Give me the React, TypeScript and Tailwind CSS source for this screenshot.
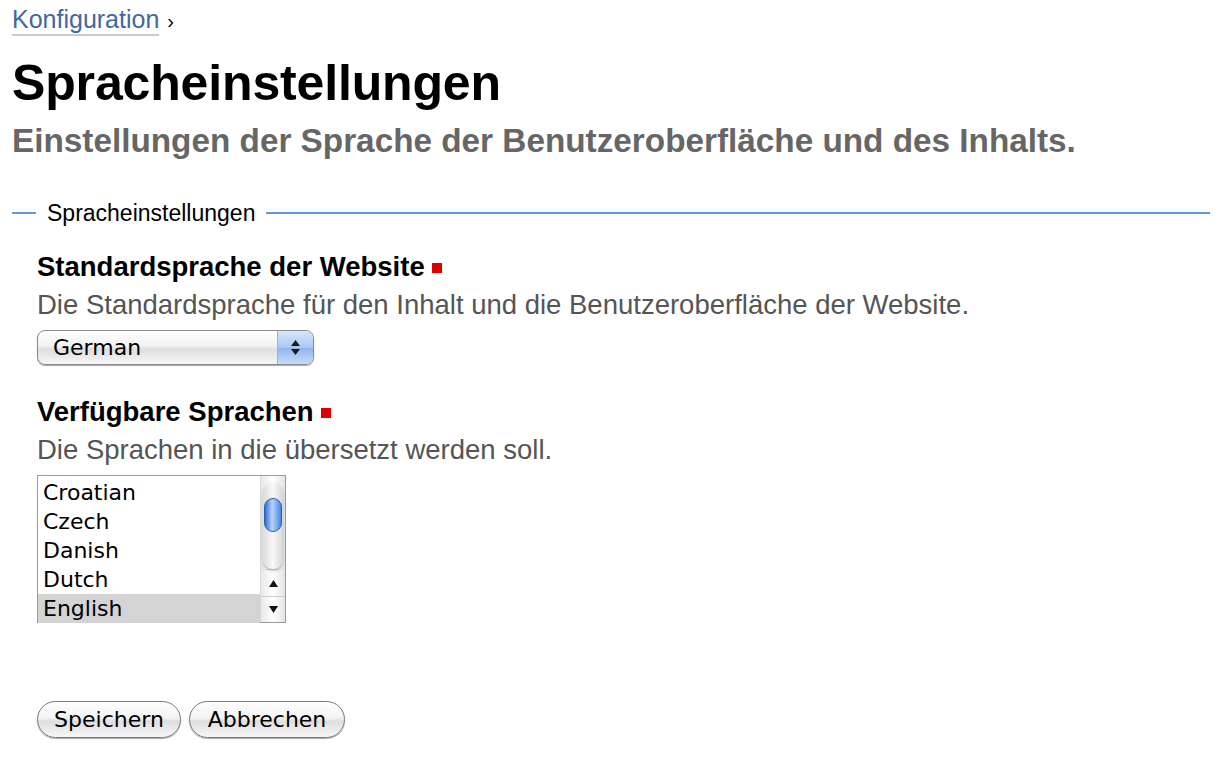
import React from "react";

const LANGUAGES = ["Croatian", "Czech", "Danish", "Dutch", "English"];

const controlFont = "font-['DejaVu_Sans','Lucida_Grande',sans-serif]";

function Required() {
  return <span className="inline-block w-[10px] h-[10px] bg-[#dd0000] ml-[7px] align-[3px]" />;
}

function SelectBox() {
  return (
    <div
      className={`relative w-[277px] h-[35px] rounded-[8px] border border-[#8a8a8a] shadow-[0_1px_1px_rgba(0,0,0,0.35)] flex overflow-hidden bg-[linear-gradient(#ffffff,#f2f2f2_45%,#dedede_55%,#f6f6f6)] ${controlFont}`}
    >
      <div className="flex-1 pl-[15px] text-[22px] leading-[34px] text-black">German</div>
      <div className="w-[36px] border-l border-[#9cb3d6] bg-[linear-gradient(#d6e6fb,#a9c9f2_50%,#8fb6ec_52%,#c4dcfb)] flex flex-col items-center justify-center gap-[3px]">
        <svg width="9" height="6" viewBox="0 0 9 6">
          <path d="M4.5 0 L9 6 L0 6 Z" fill="#1a1a1a" />
        </svg>
        <svg width="9" height="6" viewBox="0 0 9 6">
          <path d="M0 0 L9 0 L4.5 6 Z" fill="#1a1a1a" />
        </svg>
      </div>
    </div>
  );
}

function ListBox() {
  return (
    <div className={`w-[249px] h-[148px] border border-[#9a9a9a] flex ${controlFont}`}>
      <div className="flex-1 pt-[2px] border-r border-[#d8d8d8]">
        {LANGUAGES.map((l) => (
          <div
            key={l}
            className={`h-[29px] pl-[5px] text-[22px] leading-[29px] text-black ${
              l === "English" ? "bg-[#d4d4d4]" : ""
            }`}
          >
            {l}
          </div>
        ))}
      </div>
      <div className="w-[24px] flex flex-col bg-[linear-gradient(90deg,#e9e9e9,#ffffff_50%,#e4e4e4)]">
        <div className="relative h-[88px] mt-[6px] mx-[2px] rounded-[10px] bg-[linear-gradient(90deg,#dcdcdc,#f8f8f8_50%,#d6d6d6)] shadow-[0_2px_3px_rgba(0,0,0,0.25)]">
          <div className="absolute left-[1px] right-[1px] top-[16px] h-[34px] rounded-[9px] border border-[#2a5db5] bg-[linear-gradient(90deg,#2f6fd0,#b8d4fa_45%,#4a86e0)]" />
        </div>
        <div className="flex-1" />
        <div className="h-[27px] border-t border-[#e0e0e0] flex items-center justify-center">
          <svg width="9" height="7" viewBox="0 0 9 7">
            <path d="M4.5 0 L9 7 L0 7 Z" fill="#111" />
          </svg>
        </div>
        <div className="h-[26px] border-t border-[#cfcfcf] flex items-center justify-center">
          <svg width="9" height="7" viewBox="0 0 9 7">
            <path d="M0 0 L9 0 L4.5 7 Z" fill="#111" />
          </svg>
        </div>
      </div>
    </div>
  );
}

function Button({ label, width }: { label: string; width: string }) {
  return (
    <button
      className={`${width} h-[37px] rounded-full border border-[#7a7a7a] shadow-[0_1px_1px_rgba(0,0,0,0.35)] bg-[linear-gradient(#ffffff,#f3f3f3_45%,#dedede_55%,#f7f7f7)] text-[22px] leading-[35px] text-black ${controlFont}`}
    >
      {label}
    </button>
  );
}

export default function App() {
  return (
    <div className="min-h-[770px] bg-white px-[12px] font-['Liberation_Sans',Arial,sans-serif]">
      {/* Breadcrumb */}
      <div className="pt-[5px] h-[51px] text-[25px] leading-[28px]">
        <a className="text-[#44679f] border-b-2 border-[#cccccc] pb-[1px]">Konfiguration</a>
        <span className="ml-[8px] text-black text-[20px]">›</span>
      </div>

      {/* Title */}
      <h1 className="text-[50px] leading-[64px] font-bold text-black tracking-[-0.15px]">
        Spracheinstellungen
      </h1>
      <p className="mt-[6px] text-[33.3px] leading-[40px] font-bold text-[#666666]">
        Einstellungen der Sprache der Benutzeroberfläche und des Inhalts.
      </p>

      {/* Fieldset */}
      <div className="mt-[37px] flex items-center h-[30px]">
        <div className="w-[24px] h-[2px] bg-[#5e9bd6]" />
        <span className="px-[11px] text-[23px] text-black">Spracheinstellungen</span>
        <div className="flex-1 h-[2px] bg-[#5e9bd6]" />
      </div>

      <div className="pl-[25px]">
        <div className="mt-[22px] text-[27.5px] leading-[34px] font-bold text-black">
          Standardsprache der Website
          <Required />
        </div>
        <div className="mt-[4px] text-[27.5px] leading-[34px] text-[#555555]">
          Die Standardsprache für den Inhalt und die Benutzeroberfläche der Website.
        </div>
        <div className="mt-[8px]">
          <SelectBox />
        </div>

        <div className="mt-[30px] text-[27.5px] leading-[34px] font-bold text-black">
          Verfügbare Sprachen
          <Required />
        </div>
        <div className="mt-[4px] text-[27.5px] leading-[34px] text-[#555555]">
          Die Sprachen in die übersetzt werden soll.
        </div>
        <div className="mt-[8px]">
          <ListBox />
        </div>

        <div className="mt-[78px] flex gap-[8px]">
          <Button label="Speichern" width="w-[144px]" />
          <Button label="Abbrechen" width="w-[156px]" />
        </div>
      </div>
    </div>
  );
}
